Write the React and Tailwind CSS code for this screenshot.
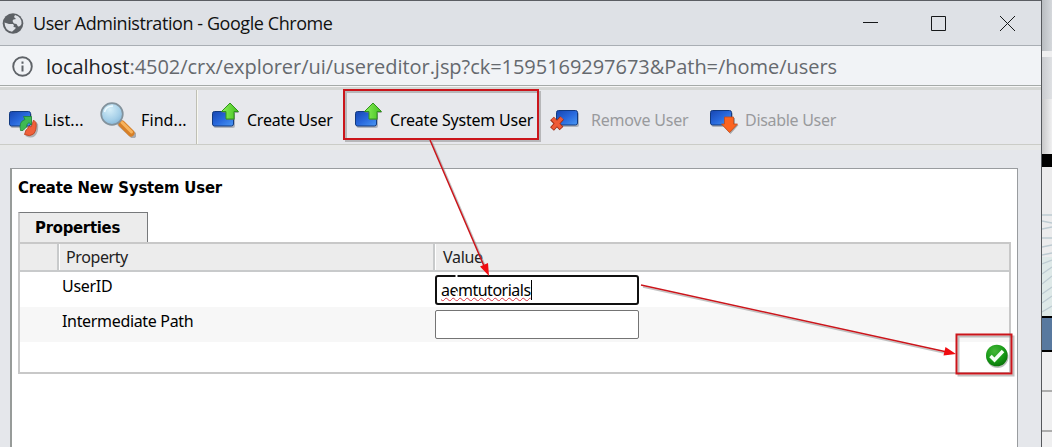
function Monitor({ x = 0, y = 0 }) {
  return (
    <g transform={`translate(${x} ${y})`}>
      <rect x="1.500" y="2" width="21.500" height="15" rx="2" fill="#8b8f99" opacity=".6" />
      <rect x="0.5" y="0.5" width="21" height="14.500" rx="2" fill="url(#blue)" stroke="#123a80" />
    </g>
  );
}

function Defs() {
  return (
    <svg className="absolute size-0">
      <defs>
        <linearGradient id="blue" x1="0" y1="0" x2="1" y2="1">
          <stop offset="0" stopColor="#1745b0" />
          <stop offset=".5" stopColor="#2868dc" />
          <stop offset="1" stopColor="#4a98f4" />
        </linearGradient>
        <linearGradient id="green" x1="0" y1="0" x2="1" y2="0">
          <stop offset="0" stopColor="#8df05c" />
          <stop offset="1" stopColor="#43c01e" />
        </linearGradient>
        <radialGradient id="glass" cx=".4" cy=".3" r=".8">
          <stop offset="0" stopColor="#d5eef8" />
          <stop offset=".6" stopColor="#a5cfe8" />
          <stop offset="1" stopColor="#7db0d4" />
        </radialGradient>
        <radialGradient id="ok" cx=".4" cy=".3" r=".75">
          <stop offset="0" stopColor="#45b637" />
          <stop offset=".6" stopColor="#179a17" />
          <stop offset="1" stopColor="#087008" />
        </radialGradient>
      </defs>
    </svg>
  );
}

function ListIcon() {
  return (
    <svg className="ml-[9px] h-[28px] w-[30px] shrink-0" viewBox="0 0 30 28">
      <Monitor y={1} />
      <path d="M17 21 L15.500 25 Q21 28 25 25 Q29 21 28 13 L25 10.500 Q23 14 22.500 17 L20 16 L18.500 20Z" fill="#777" opacity=".5" transform="translate(1 1)" />
      <path d="M17 20 L15.500 24.500 Q21 27 24.500 24 Q28 20 27 12.500 L24.500 10 Q23 15 22 17 L20 16 L18.500 19Z" fill="#f0603a" stroke="#b83d1c" strokeWidth=".8" />
      <path d="M11.500 20.500 Q9.500 11.500 16 9.500 L14.500 6.500 L22.500 6.500 L22.500 15 L20 12.500 Q17.500 14 17.500 17 L14 20.500Z" fill="#3fb953" stroke="#1f8434" strokeWidth=".8" />
    </svg>
  );
}

function FindIcon() {
  return (
    <svg className="ml-4 h-[36px] w-[36px] shrink-0" viewBox="0 0 36 36">
      <path d="M21 22 L33 33" stroke="#858991" strokeWidth="7" strokeLinecap="round" opacity=".65" />
      <path d="M18 18 L22 22" stroke="#8c95a0" strokeWidth="4" />
      <path d="M22 22 L31 31" stroke="#d78028" strokeWidth="7" strokeLinecap="round" />
      <path d="M22 20.500 L31.500 30" stroke="#f7b35d" strokeWidth="3" strokeLinecap="round" />
      <circle cx="12" cy="12" r="10.800" fill="url(#glass)" stroke="#83929c" strokeWidth="1.700" />
      <path d="M4.500 10 Q6 4 13 4" fill="none" stroke="#eefaff" strokeWidth="1.500" />
    </svg>
  );
}

function CreateIcon() {
  return (
    <svg className="h-[28px] w-[30px] shrink-0" viewBox="0 0 30 28">
      <Monitor y={9} />
      <path d="M18.500 2 L27 11 H23 V18 H14.500 V11 H10Z" fill="#777" opacity=".6" />
      <path d="M18 1 L26.500 9.500 H22 V17 H14 V9.500 H9.500Z" fill="url(#green)" stroke="#31931c" />
    </svg>
  );
}

function RemoveIcon() {
  return (
    <svg className="h-[28px] w-[30px] shrink-0" viewBox="0 0 30 28">
      <Monitor x={6} y={1} />
      <path d="M2 9.500 L11.500 19.500 M12 9 L2 20" stroke="#9c2b14" strokeWidth="5.200" />
      <path d="M2.500 9.500 L11 19 M12 9 L2.500 19.500" stroke="#ee5a36" strokeWidth="3.600" />
    </svg>
  );
}

function DisableIcon() {
  return (
    <svg className="h-[28px] w-[30px] shrink-0" viewBox="0 0 30 28">
      <Monitor y={1} />
      <path d="M15 9 H25 V16 H28.500 L20.500 25 L12 16 H15Z" fill="#777" opacity=".6" />
      <path d="M14.500 8 H23.500 V15 H27.500 L19.500 23.500 L11.500 15 H14.500Z" fill="#fc6420" stroke="#c54916" strokeWidth=".8" />
    </svg>
  );
}

function TitleBar() {
  return (
    <div className="flex h-[46px] items-center border-t border-b border-t-[#5b5e63] border-b-[#a9aeb4] bg-[#dee1e6]">
      <svg className="ml-[2px] size-[23px] shrink-0" viewBox="0 0 23 23">
        <circle cx="11" cy="11.500" r="10.300" fill="#5d6166" />
        <path d="M2.500 10.500 L7 12 L11 12 Q12.500 13 11.500 15 Q15 15 13 17 L10 19.700 Q3 19 2.500 10.500Z M13 3 Q20 5 19.500 12 Q18 15 16 14.500 L14.500 12 L12 11.500 Q9.500 8.500 11.500 7.500 L14 7 L12 5Z" fill="#dfe2e7" />
      </svg>
      <span className="ml-[8px] whitespace-nowrap font-['Open_Sans',sans-serif] text-[18px] tracking-[-0.43px] text-[#111]">User Administration - Google Chrome</span>
      <svg className="mr-[25px] ml-auto h-[20px] w-[155px] shrink-0" viewBox="0 0 155 20" fill="none" stroke="#16181a">
        <path d="M2 9.500 H17" />
        <path d="M70.500 3.500 H84.500 V17.500 H70.500Z" />
        <path d="M139 3 L154 18 M154 3 L139 18" />
      </svg>
    </div>
  );
}

function AddressBar() {
  return (
    <div className="flex h-[40px] items-center border-b border-[#a5aaa8] bg-[#f1f3f6]">
      <svg className="mt-[1px] ml-[12px] size-[21px] shrink-0" viewBox="0 0 21 21">
        <circle cx="10.500" cy="10.500" r="9.300" fill="none" stroke="#5f6368" strokeWidth="1.900" />
        <path d="M10.500 9.500 V15.500 M10.500 5.500 V7.700" stroke="#5f6368" strokeWidth="2" />
      </svg>
      <span className="mt-[2px] ml-[13px] whitespace-nowrap font-['Open_Sans',sans-serif] text-[20px] tracking-[-0.04px] text-[#65696e]"><span className="text-[#202124]">localhost</span>:4502/crx/explorer/ui/usereditor.jsp?ck=1595169297673&amp;Path=/home/users</span>
    </div>
  );
}

function Toolbar() {
  return (
    <div className="flex h-[55px] items-center whitespace-nowrap border-b border-[#cbccc7] bg-[#e7e8ec] text-[16px] tracking-[-0.3px]">
      <div className="flex w-[196px] items-center">
        <div className="flex w-[84px] items-center"><span className="mt-[13px]"><ListIcon /></span><span className="mt-[6px] ml-[5px] tracking-[0.1px]">List...</span></div>
        <span className="mt-[6px]"><FindIcon /></span><span className="mt-[6px] ml-[5px] tracking-[0.1px]">Find...</span>
      </div>
      <div className="h-full w-[2px] border-l border-[#bfbfb5] bg-[#f8f8f0]" />
      <div className="ml-[14px] flex w-[143px] items-center"><span className="-mt-[2px]"><CreateIcon /></span><span className="mt-[6px] ml-[5px] tracking-[-0.25px]">Create User</span></div>
      <div className="flex w-[195px] items-center"><span className="-mt-[2px]"><CreateIcon /></span><span className="mt-[6px] ml-[5px] tracking-[-0.2px]">Create System User</span></div>
      <div className="flex w-[160px] items-center text-[#999a9d]"><span className="mt-[12px]"><RemoveIcon /></span><span className="mt-[6px] ml-[11px] tracking-[-0.2px]">Remove User</span></div>
      <div className="flex items-center text-[#999a9d]"><span className="mt-[12px]"><DisableIcon /></span><span className="mt-[6px] ml-[5px] tracking-[-0.3px]">Disable User</span></div>
    </div>
  );
}

function Form() {
  return (
    <div className="mt-[18px] ml-[10px] h-[279px] w-[1008px] border-t border-r border-l-2 border-[#999c9f] border-l-[#979b99] bg-white pl-[6px] text-[16px]">
      <h1 className="mt-[6px] h-[24px] font-['DejaVu_Sans_Condensed','DejaVu_Sans',sans-serif] text-[16.500px] leading-[25px] font-bold tracking-[-0.15px]">Create New System User</h1>
      <div className="mt-[13px] flex h-[30px] w-[130px] items-center border-t border-r border-l-2 border-t-[#77797b] border-r-[#77797b] border-l-[#c9c9c9] bg-[#ececec] pt-[2px] pl-[15px] font-['DejaVu_Sans_Condensed','DejaVu_Sans',sans-serif] text-[16.500px] font-bold tracking-[-0.25px]">Properties</div>
      <div className="h-[132px] w-[993px] border-2 border-[#c8c8c8]">
        <div className="flex h-[28px] items-center border-b-2 border-[#c8cacb] bg-[#ececec] text-[#222]">
          <div className="h-full w-[39px] border-r-2 border-[#c8cacb]" />
          <div className="flex h-full w-[376px] items-center border-r-2 border-l border-r-[#c8cacb] border-l-white pl-[6px] tracking-[-0.4px]">Property</div>
          <div className="flex h-full grow items-center border-l border-white pl-[7px] tracking-[-0.3px]">Value</div>
        </div>
        <div className="flex h-[35px] items-center">
          <div className="w-[415px] pl-[42px] pb-[8px] tracking-[-0.3px]">UserID</div>
          <div className="flex h-[30px] w-[204px] items-center rounded-[3px] border-2 border-[#101010] bg-white pl-[4px]">
            <div className="flex h-[20px] items-center border-r border-black">
              <span className="underline decoration-[#dc3545] decoration-wavy decoration-[1px] underline-offset-[1px] tracking-[-0.5px] [text-decoration-skip-ink:none]">aemtutorials</span>
            </div>
          </div>
        </div>
        <div className="flex h-[35px] items-center bg-[#f7f7f7]">
          <div className="w-[415px] pl-[42px] pb-[8px] tracking-[-0.33px]">Intermediate Path</div>
          <div className="h-[29px] w-[204px] rounded-[2px] border border-[#747474] bg-white" />
        </div>
        <div className="flex h-[30px] items-center justify-end">
          <svg className="mb-[2px] size-[25px]" viewBox="0 0 25 25">
            <circle cx="13.500" cy="13" r="11" fill="#77807a" opacity=".5" />
            <circle cx="12.800" cy="11.500" r="10.800" fill="url(#ok)" />
            <path d="M6.500 12 L10.500 16 L19 7" fill="none" stroke="#f5fff5" strokeWidth="3.500" />
          </svg>
        </div>
      </div>
    </div>
  );
}

function Backdrop() {
  return (
    <div className="flex w-[10px] shrink-0 flex-col bg-[#efeff0]">
      <div className="h-[51px] bg-linear-to-r from-[#b9bdc1] to-[#d5d8dc]" />
      <div className="h-[6px] bg-[#efeff0]" />
      <div className="h-[42px] bg-linear-to-r from-[#c9cbcf] to-[#dfe1e4]" />
      <div className="h-[55px] bg-linear-to-r from-[#c8c8c9] to-[#f0f0f1]" />
      <div className="h-[13px] bg-black" />
      <svg className="h-[149px] w-[10px]" viewBox="0 0 10 149">
        <rect width="10" height="149" fill="#ececed" />
        <rect y="90" width="10" height="59" fill="#dee9e8" />
        <g fill="none" stroke="#bdcbd2" strokeWidth="1.300">
          <path d="M0 48 H10 M0 54 L10 56 M0 62 L10 60 M0 71 H10 M0 80 L10 78 M0 88 L10 86 M0 97 L10 93 M0 107 L10 100 M0 117 L10 109 M0 127 L10 120 M0 136 L10 129 M0 145 L10 139" />
        </g>
      </svg>
      <div className="h-[36px] border-y-2 border-black bg-[#58799f]" />
      <div className="h-[40px] border-b-2 border-[#adadad]" />
      <div className="h-[40px] border-b-2 border-[#adadad]" />
      <div className="grow" />
    </div>
  );
}

function Annotations() {
  return (
    <svg className="pointer-events-none absolute inset-0 h-[447px] w-[1052px]" viewBox="0 0 1052 447">
      <g fill="none" stroke="#888" strokeWidth="2" opacity=".5" transform="translate(2 2)">
        <rect x="344" y="90" width="194" height="49" />
        <rect x="956.500" y="334.500" width="55" height="39" />
        <path d="M430 140 L484 266 M641 285 L947 352" strokeWidth="1.500" />
      </g>
      <g fill="none" stroke="#cb151b" strokeWidth="2">
        <rect x="344" y="90" width="194" height="49" />
        <rect x="956.500" y="334.500" width="55" height="39" />
        <path d="M430 140 L484 266 M641 285 L947 352" strokeWidth="1.500" />
      </g>
      <path d="M489 276 L480 266.500 L488 263Z M956 354 L943.500 355.500 L945.500 347Z" fill="#f00b10" />
      <path d="M456.500 272 V279 M456.500 282 V286 M456.500 291 V300" stroke="white" strokeWidth="2" />
    </svg>
  );
}

export default function App() {
  return (
    <div className="relative flex h-[447px] w-[1052px] overflow-hidden font-['Noto_Sans',sans-serif] text-black">
      <Defs />
      <div className="w-[1042px] shrink-0 border-r border-[#55585c] bg-[#e5e7eb]">
        <TitleBar />
        <AddressBar />
        <div className="h-[4px] border-t border-[#f6f6f6] bg-[#d5d7d5]" />
        <Toolbar />
        <div className="h-[5px] bg-[#e7e8e8]" />
        <Form />
      </div>
      <Backdrop />
      <Annotations />
    </div>
  );
}
